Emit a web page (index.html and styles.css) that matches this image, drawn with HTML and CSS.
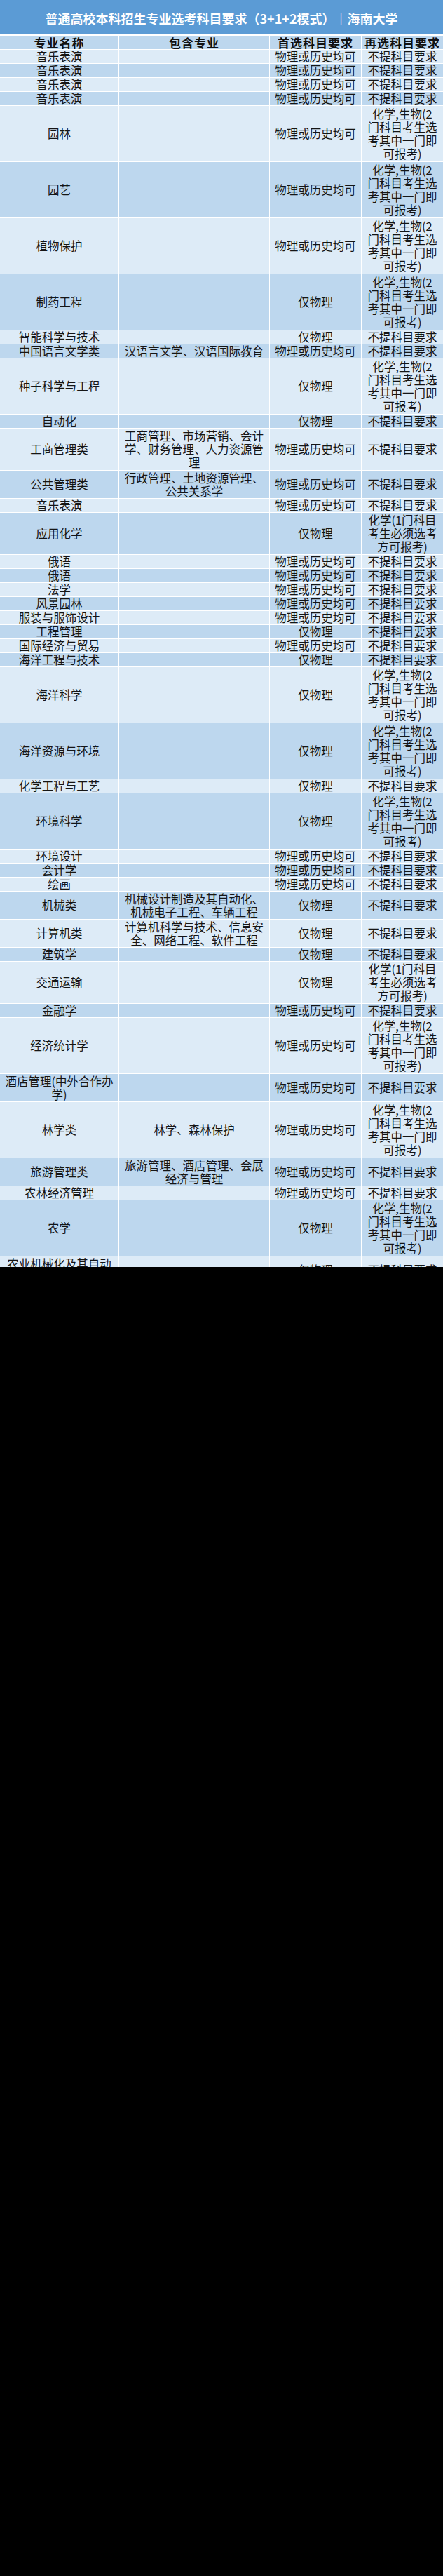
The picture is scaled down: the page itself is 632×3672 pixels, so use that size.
FILE: index.html
```html
<!DOCTYPE html>
<html lang="zh-CN">
<head>
<meta charset="utf-8">
<title>普通高校本科招生专业选考科目要求 | 海南大学</title>
<link rel="stylesheet" href="styles.css">
</head>
<body>
<div class="sheet">
  <div class="title">普通高校本科招生专业选考科目要求（3+1+2模式）｜海南大学</div>
  <div class="table">
    <div class="row head r1"><div class="c">专业名称</div><div class="c">包含专业</div><div class="c">首选科目要求</div><div class="c">再选科目要求</div></div>

    <div class="row lt r1"><div class="c">音乐表演</div><div class="c"></div><div class="c">物理或历史均可</div><div class="c">不提科目要求</div></div>
    <div class="row dk r1"><div class="c">音乐表演</div><div class="c"></div><div class="c">物理或历史均可</div><div class="c">不提科目要求</div></div>
    <div class="row lt r1"><div class="c">音乐表演</div><div class="c"></div><div class="c">物理或历史均可</div><div class="c">不提科目要求</div></div>
    <div class="row dk r1"><div class="c">音乐表演</div><div class="c"></div><div class="c">物理或历史均可</div><div class="c">不提科目要求</div></div>

    <div class="row lt r4"><div class="c">园林</div><div class="c"></div><div class="c">物理或历史均可</div><div class="c">化学,生物(2<br>门科目考生选<br>考其中一门即<br>可报考)</div></div>
    <div class="row dk r4"><div class="c">园艺</div><div class="c"></div><div class="c">物理或历史均可</div><div class="c">化学,生物(2<br>门科目考生选<br>考其中一门即<br>可报考)</div></div>
    <div class="row lt r4"><div class="c">植物保护</div><div class="c"></div><div class="c">物理或历史均可</div><div class="c">化学,生物(2<br>门科目考生选<br>考其中一门即<br>可报考)</div></div>
    <div class="row dk r4"><div class="c">制药工程</div><div class="c"></div><div class="c">仅物理</div><div class="c">化学,生物(2<br>门科目考生选<br>考其中一门即<br>可报考)</div></div>

    <div class="row lt r1"><div class="c">智能科学与技术</div><div class="c"></div><div class="c">仅物理</div><div class="c">不提科目要求</div></div>
    <div class="row dk r1"><div class="c">中国语言文学类</div><div class="c">汉语言文学、汉语国际教育</div><div class="c">物理或历史均可</div><div class="c">不提科目要求</div></div>
    <div class="row lt r4"><div class="c">种子科学与工程</div><div class="c"></div><div class="c">仅物理</div><div class="c">化学,生物(2<br>门科目考生选<br>考其中一门即<br>可报考)</div></div>
    <div class="row dk r1"><div class="c">自动化</div><div class="c"></div><div class="c">仅物理</div><div class="c">不提科目要求</div></div>
    <div class="row lt r3"><div class="c">工商管理类</div><div class="c">工商管理、市场营销、会计<br>学、财务管理、人力资源管<br>理</div><div class="c">物理或历史均可</div><div class="c">不提科目要求</div></div>
    <div class="row dk r2"><div class="c">公共管理类</div><div class="c">行政管理、土地资源管理、<br>公共关系学</div><div class="c">物理或历史均可</div><div class="c">不提科目要求</div></div>
    <div class="row lt r1"><div class="c">音乐表演</div><div class="c"></div><div class="c">物理或历史均可</div><div class="c">不提科目要求</div></div>
    <div class="row dk r3"><div class="c">应用化学</div><div class="c"></div><div class="c">仅物理</div><div class="c">化学(1门科目<br>考生必须选考<br>方可报考)</div></div>

    <div class="row lt r1"><div class="c">俄语</div><div class="c"></div><div class="c">物理或历史均可</div><div class="c">不提科目要求</div></div>
    <div class="row dk r1"><div class="c">俄语</div><div class="c"></div><div class="c">物理或历史均可</div><div class="c">不提科目要求</div></div>
    <div class="row lt r1"><div class="c">法学</div><div class="c"></div><div class="c">物理或历史均可</div><div class="c">不提科目要求</div></div>
    <div class="row dk r1"><div class="c">风景园林</div><div class="c"></div><div class="c">物理或历史均可</div><div class="c">不提科目要求</div></div>
    <div class="row lt r1"><div class="c">服装与服饰设计</div><div class="c"></div><div class="c">物理或历史均可</div><div class="c">不提科目要求</div></div>
    <div class="row dk r1"><div class="c">工程管理</div><div class="c"></div><div class="c">仅物理</div><div class="c">不提科目要求</div></div>
    <div class="row lt r1"><div class="c">国际经济与贸易</div><div class="c"></div><div class="c">物理或历史均可</div><div class="c">不提科目要求</div></div>
    <div class="row dk r1"><div class="c">海洋工程与技术</div><div class="c"></div><div class="c">仅物理</div><div class="c">不提科目要求</div></div>

    <div class="row lt r4"><div class="c">海洋科学</div><div class="c"></div><div class="c">仅物理</div><div class="c">化学,生物(2<br>门科目考生选<br>考其中一门即<br>可报考)</div></div>
    <div class="row dk r4"><div class="c">海洋资源与环境</div><div class="c"></div><div class="c">仅物理</div><div class="c">化学,生物(2<br>门科目考生选<br>考其中一门即<br>可报考)</div></div>
    <div class="row lt r1"><div class="c">化学工程与工艺</div><div class="c"></div><div class="c">仅物理</div><div class="c">不提科目要求</div></div>
    <div class="row dk r4"><div class="c">环境科学</div><div class="c"></div><div class="c">仅物理</div><div class="c">化学,生物(2<br>门科目考生选<br>考其中一门即<br>可报考)</div></div>

    <div class="row lt r1"><div class="c">环境设计</div><div class="c"></div><div class="c">物理或历史均可</div><div class="c">不提科目要求</div></div>
    <div class="row dk r1"><div class="c">会计学</div><div class="c"></div><div class="c">物理或历史均可</div><div class="c">不提科目要求</div></div>
    <div class="row lt r1"><div class="c">绘画</div><div class="c"></div><div class="c">物理或历史均可</div><div class="c">不提科目要求</div></div>
    <div class="row dk r2"><div class="c">机械类</div><div class="c">机械设计制造及其自动化、<br>机械电子工程、车辆工程</div><div class="c">仅物理</div><div class="c">不提科目要求</div></div>
    <div class="row lt r2"><div class="c">计算机类</div><div class="c">计算机科学与技术、信息安<br>全、网络工程、软件工程</div><div class="c">仅物理</div><div class="c">不提科目要求</div></div>
    <div class="row dk r1"><div class="c">建筑学</div><div class="c"></div><div class="c">仅物理</div><div class="c">不提科目要求</div></div>
    <div class="row lt r3"><div class="c">交通运输</div><div class="c"></div><div class="c">仅物理</div><div class="c">化学(1门科目<br>考生必须选考<br>方可报考)</div></div>
    <div class="row dk r1"><div class="c">金融学</div><div class="c"></div><div class="c">物理或历史均可</div><div class="c">不提科目要求</div></div>

    <div class="row lt r4"><div class="c">经济统计学</div><div class="c"></div><div class="c">物理或历史均可</div><div class="c">化学,生物(2<br>门科目考生选<br>考其中一门即<br>可报考)</div></div>
    <div class="row dk r2"><div class="c">酒店管理(中外合作办<br>学)</div><div class="c"></div><div class="c">物理或历史均可</div><div class="c">不提科目要求</div></div>
    <div class="row lt r4"><div class="c">林学类</div><div class="c">林学、森林保护</div><div class="c">物理或历史均可</div><div class="c">化学,生物(2<br>门科目考生选<br>考其中一门即<br>可报考)</div></div>
    <div class="row dk r2"><div class="c">旅游管理类</div><div class="c">旅游管理、酒店管理、会展<br>经济与管理</div><div class="c">物理或历史均可</div><div class="c">不提科目要求</div></div>
    <div class="row lt r1"><div class="c">农林经济管理</div><div class="c"></div><div class="c">物理或历史均可</div><div class="c">不提科目要求</div></div>
    <div class="row dk r4"><div class="c">农学</div><div class="c"></div><div class="c">仅物理</div><div class="c">化学,生物(2<br>门科目考生选<br>考其中一门即<br>可报考)</div></div>
    <div class="row lt r2"><div class="c">农业机械化及其自动<br>化</div><div class="c"></div><div class="c">仅物理</div><div class="c">不提科目要求</div></div>
  </div>
</div>
</body>
</html>
```

FILE: styles.css
```css
html, body {
  margin: 0;
  padding: 0;
  background: #000;
}

.sheet {
  width: 632px;
  height: 1806px;
  overflow: hidden;
  background: #ffffff;
  font-family: "Noto Sans CJK SC", "Noto Sans", sans-serif;
  color: #151515;
}

.title {
  height: 48px;
  margin-bottom: 3px;
  background: #5b9bd5;
  color: #ffffff;
  font-size: 18px;
  font-weight: 700;
  display: flex;
  align-items: center;
  justify-content: center;
  white-space: nowrap;
  padding-top: 4px;
  box-sizing: border-box;
}

.table {
  display: flex;
  flex-direction: column;
  gap: 1px;
}

.row {
  display: grid;
  grid-template-columns: 169px 214px 130px 116px;
  column-gap: 1px;
}

.r1 { height: 19px; }
.r2 { height: 39px; }
.r3 { height: 59px; }
.r4 { height: 79px; }

.c {
  display: flex;
  align-items: center;
  justify-content: center;
  text-align: center;
  font-size: 16.5px;
  line-height: 19px;
  white-space: nowrap;
}

.lt .c { background: #ddebf7; }
.dk .c { background: #bdd7ee; }

.head .c {
  background: #bdd7ee;
  font-weight: 700;
  font-size: 17px;
  letter-spacing: 1px;
  color: #111;
}
```
